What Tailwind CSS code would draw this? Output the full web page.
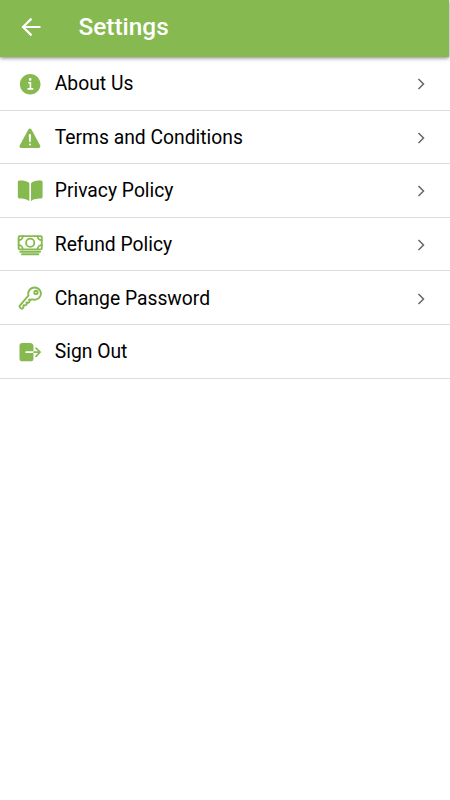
<!DOCTYPE html>
<html lang="en">
<head>
<meta charset="utf-8">
<title>Settings</title>
<script src="https://cdn.jsdelivr.net/npm/@tailwindcss/browser@4"></script>
</head>
<body class="h-[800px] overflow-hidden bg-white font-[Roboto,sans-serif] text-black">
<header class="relative flex h-[57px] w-[449px] items-center bg-[#86b94f] pb-1 pl-[20.5px] text-white shadow-[0_1px_4px_rgba(0,0,0,0.5)]">
  <svg class="h-5 w-5" viewBox="0 0 20 20" fill="none" stroke="currentColor" stroke-width="2.2"><path d="M19.500 10H2M10.500 1.6 2 10l8.500 8.400"/></svg>
  <h1 class="ml-[38px] text-[24.4px] leading-7 font-medium">Settings</h1>
</header>
<main class="text-[19.3px] leading-6">
  <a class="flex h-[53.6px] items-center border-b border-[#dcdcdc] pt-[2px] pr-[22.5px] pl-[17.2px]">
    <svg class="h-[26.4px] w-[26.4px] text-[#86b94f]" viewBox="0 0 512 512" fill="currentColor"><path d="M256 56C145.72 56 56 145.72 56 256s89.72 200 200 200 200-89.720 200-200S366.28 56 256 56zm0 82a26 26 0 1 1-26 26 26 26 0 0 1 26-26zm48 226h-88a16 16 0 0 1 0-32h28v-88h-16a16 16 0 0 1 0-32h32a16 16 0 0 1 16 16v104h28a16 16 0 0 1 0 32z"/></svg>
    <span class="ml-[11.200px] flex-1">About Us</span>
    <svg class="h-3.5 w-3.5" viewBox="0 0 14 14" fill="none" stroke="#666" stroke-width="1.5"><path d="m4.500 2 5 5-5 5"/></svg>
  </a>
  <a class="flex h-[53.6px] items-center border-b border-[#dcdcdc] pt-[2px] pr-[22.5px] pl-[17.2px]">
    <svg class="h-[26.4px] w-[26.4px] text-[#86b94f]" viewBox="0 0 512 512" fill="currentColor"><path d="M449.07 399.08L278.64 82.58c-12.08-22.44-44.26-22.44-56.35 0L51.87 399.08A32 32 0 0 0 80 446.25h340.89a32 32 0 0 0 28.18-47.17zm-198.6-1.83a20 20 0 1 1 20-20 20 20 0 0 1-20 20zm21.72-201.15l-5.74 122a16 16 0 0 1-32 0l-5.74-121.95a21.73 21.73 0 0 1 21.5-22.69h.21a21.74 21.74 0 0 1 21.73 22.7z"/></svg>
    <span class="ml-[11.200px] flex-1">Terms and Conditions</span>
    <svg class="h-3.5 w-3.5" viewBox="0 0 14 14" fill="none" stroke="#666" stroke-width="1.5"><path d="m4.500 2 5 5-5 5"/></svg>
  </a>
  <a class="flex h-[53.6px] items-center border-b border-[#dcdcdc] pt-[2px] pr-[22.5px] pl-[17.2px]">
    <svg class="h-[26.4px] w-[26.4px] text-[#86b94f]" viewBox="0 0 512 512" fill="currentColor"><path d="M202.24 74C166.11 56.75 115.61 48.3 48 48a31.36 31.36 0 0 0-17.92 5.33A32 32 0 0 0 16 79.9V366c0 19.34 13.76 33.93 32 33.93 71.07 0 142.36 6.64 185.06 47a4.11 4.11 0 0 0 6.94-3V106.82a15.89 15.89 0 0 0-5.46-12A143 143 0 0 0 202.24 74zM481.92 53.3A31.33 31.33 0 0 0 464 48c-67.61.3-118.11 8.71-154.24 26a143.31 143.31 0 0 0-32.31 20.78 15.93 15.93 0 0 0-5.45 12v337.13a3.93 3.93 0 0 0 6.68 2.81c25.67-25.5 70.72-46.82 185.36-46.81a32 32 0 0 0 32-32v-288a32 32 0 0 0-14.12-26.61z"/></svg>
    <span class="ml-[11.200px] flex-1">Privacy Policy</span>
    <svg class="h-3.5 w-3.5" viewBox="0 0 14 14" fill="none" stroke="#666" stroke-width="1.5"><path d="m4.500 2 5 5-5 5"/></svg>
  </a>
  <a class="flex h-[53.6px] items-center border-b border-[#dcdcdc] pt-[2px] pr-[22.5px] pl-[17.2px]">
    <svg class="h-[26.4px] w-[26.4px] text-[#86b94f]" viewBox="0 0 512 512" fill="none" stroke="currentColor" stroke-width="36" stroke-linecap="round" stroke-linejoin="round"><rect x="32" y="80" width="448" height="256" rx="16"/><path d="M64 384h384M96 432h320M480 160a80 80 0 0 1-80-80M32 160a80 80 0 0 0 80-80M480 256a80 80 0 0 0-80 80M32 256a80 80 0 0 1 80 80"/><circle cx="256" cy="208" r="80"/></svg>
    <span class="ml-[11.200px] flex-1">Refund Policy</span>
    <svg class="h-3.5 w-3.5" viewBox="0 0 14 14" fill="none" stroke="#666" stroke-width="1.5"><path d="m4.500 2 5 5-5 5"/></svg>
  </a>
  <a class="flex h-[53.6px] items-center border-b border-[#dcdcdc] pt-[2px] pr-[22.5px] pl-[17.2px]">
    <svg class="h-[26.4px] w-[26.4px] text-[#86b94f]" viewBox="0 0 512 512" fill="none" stroke="currentColor" stroke-width="36" stroke-linejoin="round"><path d="M218.1 167.17c0 13 0 25.6 4.1 37.4-43.1 50.6-156.9 184.3-167.5 194.5a20.17 20.17 0 0 0-6.7 15c0 8.500 5.2 16.7 9.6 21.3 6.6 6.9 34.8 33 40 28 15.4-15 18.5-19 24.8-25.2 9.5-9.3-1-28.3 2.3-36s6.8-9.2 12.5-10.4 15.8 2.9 23.7 3c8.3.1 12.8-3.4 19-9.2 5-4.6 8.6-8.9 8.7-15.6.2-9-12.8-20.9-3.1-30.4s23.7 6.2 34 5 22.8-15.5 24.1-21.6-11.7-21.8-9.7-30.7c.7-3 6.8-10 11.4-11s25 6.9 29.6 5.9c5.6-1.2 12.1-7.1 17.4-10.4 15.5 6.7 29.6 9.4 47.7 9.4 68.5 0 124-53.4 124-119.2S408.5 48 340 48s-121.9 53.37-121.9 119.17z"/><circle cx="368" cy="144" r="32"/></svg>
    <span class="ml-[11.200px] flex-1">Change Password</span>
    <svg class="h-3.5 w-3.5" viewBox="0 0 14 14" fill="none" stroke="#666" stroke-width="1.5"><path d="m4.500 2 5 5-5 5"/></svg>
  </a>
  <a class="flex h-[53.6px] items-center border-b border-[#dcdcdc] pt-[2px] pr-[22.5px] pl-[17.2px]">
    <svg class="h-[26.4px] w-[26.4px] text-[#86b94f]" viewBox="0 0 512 512" fill="currentColor"><path d="M160 256a16 16 0 0 1 16-16h144V136c0-32-33.79-56-64-56H104a56.06 56.06 0 0 0-56 56v240a56.06 56.06 0 0 0 56 56h160a56.06 56.06 0 0 0 56-56V272H176a16 16 0 0 1-16-16zM459.31 244.69l-80-80a16 16 0 0 0-22.62 22.62L409.37 240H320v32h89.37l-52.68 52.69a16 16 0 1 0 22.62 22.62l80-80a16 16 0 0 0 0-22.62z"/></svg>
    <span class="ml-[11.200px] flex-1">Sign Out</span>
  </a>
</main>
</body>
</html>
